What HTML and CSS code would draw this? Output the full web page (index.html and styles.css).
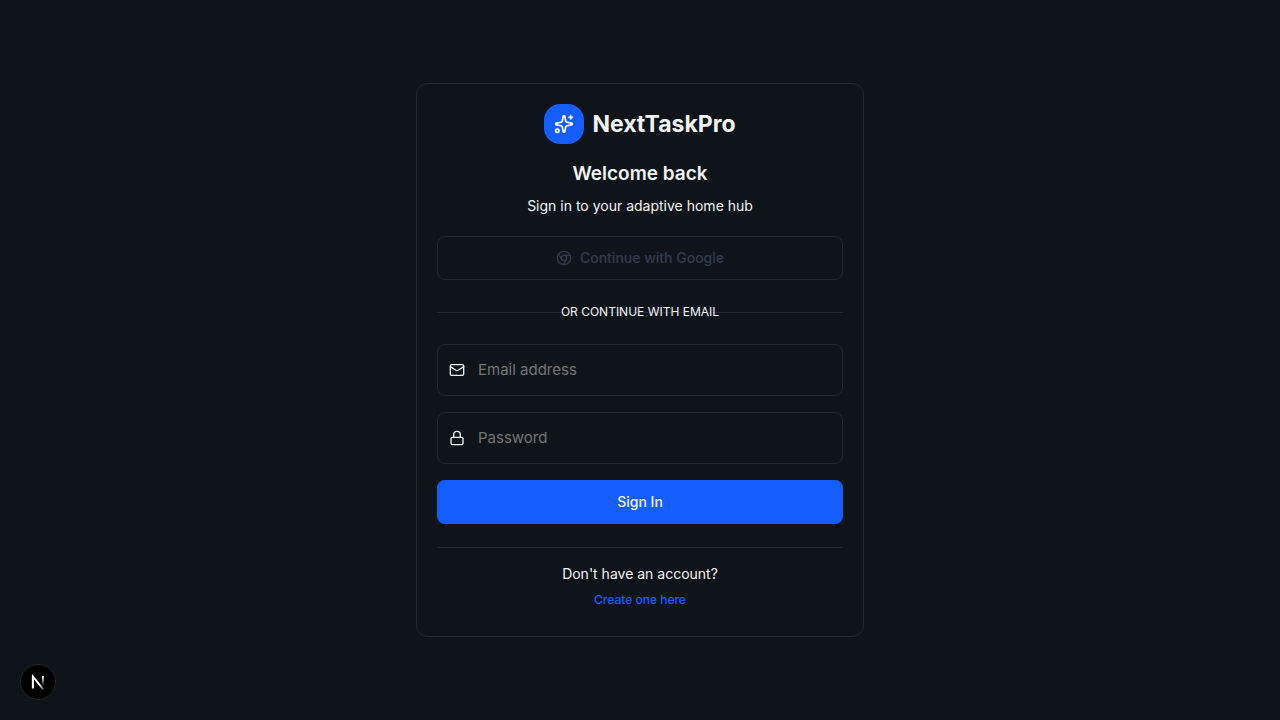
FILE: index.html
```html
<!DOCTYPE html>
<html lang="en">
<head>
<meta charset="utf-8">
<meta name="viewport" content="width=device-width, initial-scale=1">
<title>NextTaskPro</title>
<link rel="stylesheet" href="styles.css">
</head>
<body>
<main class="page">
  <section class="card">
    <header class="header">
      <div class="brand">
        <span class="brand-mark">
          <svg class="icon icon-brand" viewBox="0 0 24 24" aria-hidden="true"><path d="M11.017 2.814a1 1 0 0 1 1.966 0l1.051 5.558a2 2 0 0 0 1.594 1.594l5.558 1.051a1 1 0 0 1 0 1.966l-5.558 1.051a2 2 0 0 0-1.594 1.594l-1.051 5.558a1 1 0 0 1-1.966 0l-1.051-5.558a2 2 0 0 0-1.594-1.594l-5.558-1.051a1 1 0 0 1 0-1.966l5.558-1.051a2 2 0 0 0 1.594-1.594z"/><path d="M20 2v4"/><path d="M22 4h-4"/><circle cx="4" cy="20" r="2"/></svg>
        </span>
        <span class="brand-name">NextTaskPro</span>
      </div>
      <h1 class="title">Welcome back</h1>
      <p class="subtitle">Sign in to your adaptive home hub</p>
    </header>

    <button class="button button-outline" type="button" disabled>
      <svg class="icon" viewBox="0 0 24 24" aria-hidden="true"><circle cx="12" cy="12" r="10"/><circle cx="12" cy="12" r="4"/><path d="M21.17 8H12"/><path d="M3.95 6.06 8.54 14"/><path d="M10.88 21.94 15.46 14"/></svg>
      Continue with Google
    </button>

    <div class="divider"><span class="divider-text">Or continue with email</span></div>

    <form class="form">
      <label class="field">
        <svg class="icon" viewBox="0 0 24 24" aria-hidden="true"><rect x="2" y="4" width="20" height="16" rx="2"/><path d="m22 7-8.991 5.727a2 2 0 0 1-2.009 0L2 7"/></svg>
        <input class="input" type="email" placeholder="Email address" aria-label="Email address">
      </label>
      <label class="field">
        <svg class="icon" viewBox="0 0 24 24" aria-hidden="true"><rect x="3" y="11" width="18" height="11" rx="2"/><path d="M7 11V7a5 5 0 0 1 10 0v4"/></svg>
        <input class="input" type="password" placeholder="Password" aria-label="Password">
      </label>
      <button class="button button-primary" type="submit">Sign In</button>
    </form>

    <footer class="footer">
      <p class="prompt">Don't have an account?</p>
      <a class="link" href="#">Create one here</a>
    </footer>
  </section>
</main>

<button class="dev-badge" type="button" aria-label="Open developer tools">
  <svg class="dev-logo" viewBox="0 0 40 40" fill="none" aria-hidden="true">
    <defs>
      <linearGradient id="fade-diagonal" x1="22" y1="23" x2="29" y2="32" gradientUnits="userSpaceOnUse"><stop stop-color="#fff"/><stop offset="1" stop-color="#fff" stop-opacity="0"/></linearGradient>
      <linearGradient id="fade-stem" x1="26" y1="13" x2="26" y2="25" gradientUnits="userSpaceOnUse"><stop stop-color="#fff"/><stop offset="1" stop-color="#fff" stop-opacity="0"/></linearGradient>
    </defs>
    <path d="M13.6 28V13L26.6 29.1" stroke="url(#fade-diagonal)" stroke-width="2.4"/>
    <path d="M13.6 27.5V13.4" stroke="#fff" stroke-width="2.4"/>
    <path d="M26.2 12.6V27.5" stroke="url(#fade-stem)" stroke-width="2.4"/>
  </svg>
</button>
</body>
</html>
```
FILE: styles.css
```css
*, *::before, *::after { box-sizing: border-box; }

body {
  margin: 0;
  background: #0f141b;
  color: #f3f4f6;
  font-family: Inter, "Liberation Sans", sans-serif;
  font-size: 14px;
  line-height: 20px;
}

h1, p { margin: 0; }

.page {
  display: flex;
  align-items: center;
  justify-content: center;
  min-height: 100vh;
  padding: 16px;
}

.card {
  width: 100%;
  max-width: 448px;
  padding: 20px;
  border: 1px solid #232938;
  border-radius: 12px;
}

.header {
  display: flex;
  flex-direction: column;
  align-items: center;
  margin-bottom: 20px;
  text-align: center;
}

.brand {
  display: flex;
  align-items: center;
  gap: 8px;
  margin-bottom: 16px;
}

.brand-mark {
  display: grid;
  place-items: center;
  width: 40px;
  height: 40px;
  border-radius: 16px;
  background: #155dfc;
  color: #fff;
}

.brand-name {
  font-size: 23px;
  font-weight: 700;
  line-height: 32px;
}

.title {
  margin-bottom: 8px;
  font-size: 19px;
  font-weight: 600;
  line-height: 28px;
}

.icon {
  flex: none;
  width: 16px;
  height: 16px;
  fill: none;
  stroke: currentColor;
  stroke-width: 2;
  stroke-linecap: round;
  stroke-linejoin: round;
}

.icon-brand { width: 20px; height: 20px; }

.button {
  display: flex;
  align-items: center;
  justify-content: center;
  gap: 8px;
  width: 100%;
  height: 44px;
  border: 1px solid transparent;
  border-radius: 8px;
  font: inherit;
  font-weight: 500;
}

.button-outline {
  border-color: #232938;
  background: transparent;
  color: #333c4d;
}

.button-primary {
  background: #155dfc;
  color: #f3f4f6;
  cursor: pointer;
}

.divider {
  display: grid;
  align-items: center;
  margin: 24px 0;
  font-size: 12px;
  line-height: 16px;
  text-align: center;
  text-transform: uppercase;
}

.divider::before {
  content: "";
  grid-area: 1 / 1;
  border-top: 1px solid #232938;
}

.divider-text { grid-area: 1 / 1; z-index: 1; }

.form {
  display: flex;
  flex-direction: column;
  gap: 16px;
}

.field {
  display: flex;
  align-items: center;
  gap: 13px;
  height: 52px;
  padding: 0 11px;
  border: 1px solid #232938;
  border-radius: 8px;
}

.input {
  flex: 1;
  min-width: 0;
  padding: 0;
  border: 0;
  outline: 0;
  background: transparent;
  color: inherit;
  font: inherit;
  font-size: 15px;
  line-height: 24px;
}

.input::placeholder { color: #757575; opacity: 1; }

.footer {
  display: flex;
  flex-direction: column;
  align-items: center;
  gap: 8px;
  margin-top: 23px;
  padding: 16px 0 8px;
  border-top: 1px solid #232938;
}

.link {
  color: #155dfc;
  font-size: 12px;
  font-weight: 500;
  line-height: 16px;
  text-decoration: none;
}

.dev-badge {
  position: fixed;
  bottom: 20px;
  left: 20px;
  display: grid;
  place-items: center;
  width: 36px;
  height: 36px;
  padding: 0;
  border: 1px solid #262626;
  border-radius: 50%;
  background: #000;
  cursor: pointer;
}

.dev-logo { width: 32px; height: 32px; }
```
